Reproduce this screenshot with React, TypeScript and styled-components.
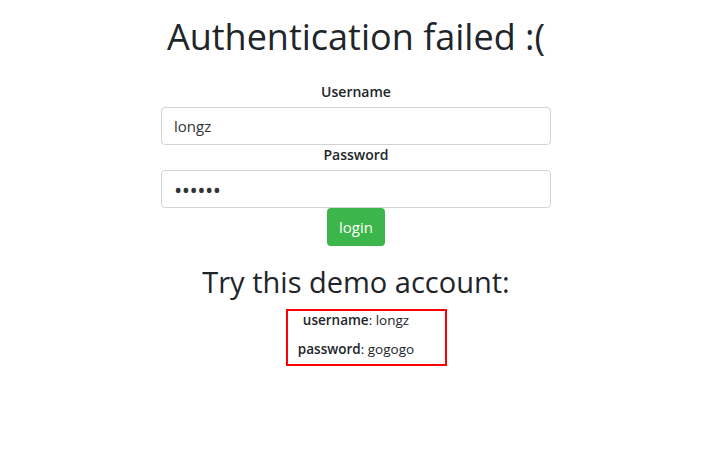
import React from "react";
import styled, { createGlobalStyle } from "styled-components";

const GlobalStyle = createGlobalStyle`
  html, body {
    margin: 0;
    padding: 0;
    background: #ffffff;
  }
  body {
    font-family: "Open Sans", "Noto Sans", sans-serif;
    color: #212529;
  }
`;

const Page = styled.div`
  display: flex;
  flex-direction: column;
  align-items: center;
  padding-right: 13px;
`;

const Title = styled.h1`
  margin: 13px 0 0;
  font-size: 36px;
  line-height: 47px;
  font-weight: 400;
  color: #212529;
`;

const LoginForm = styled.form`
  width: 390px;
  display: flex;
  flex-direction: column;
  align-items: center;
  margin-top: 22px;
`;

const Label = styled.label`
  font-size: 14px;
  font-weight: 600;
  line-height: 20px;
  margin-bottom: 5px;
`;

const TextInput = styled.input<{ $secret?: boolean }>`
  box-sizing: border-box;
  width: 100%;
  height: 38px;
  padding: 6px 12px;
  border: 1px solid #ced4da;
  border-radius: 4px;
  font-family: inherit;
  font-size: ${({ $secret }) => ($secret ? "22px" : "15px")};
  letter-spacing: ${({ $secret }) => ($secret ? "-0.5px" : "0")};
  color: #333333;
  background: #fff;
  outline: none;
`;

const LoginButton = styled.button`
  height: 38px;
  padding: 0 12px;
  border: none;
  border-radius: 4px;
  background: #3cb54a;
  color: #ffffff;
  font-family: inherit;
  font-size: 15px;
`;

const SubTitle = styled.h2`
  margin: 18px 0 0;
  font-size: 29px;
  line-height: 36px;
  font-weight: 400;
  color: #212529;
`;

const BoxRow = styled.div`
  display: flex;
  justify-content: center;
  margin-top: 9px;
`;

const CredBox = styled.div`
  box-sizing: border-box;
  width: 161px;
  height: 57px;
  margin-left: 21px;
  padding-right: 21px;
  border: 2px solid #ff0000;
  display: flex;
  flex-direction: column;
  align-items: center;
  gap: 11px;
  font-size: 13.5px;
`;

const CredLine = styled.div`
  line-height: 18px;
  b {
    font-weight: 600;
  }
`;

export default function App() {
  return (
    <Page>
      <GlobalStyle />
      <Title>Authentication failed :(</Title>
      <LoginForm onSubmit={(e) => e.preventDefault()}>
        <Label htmlFor="username">Username</Label>
        <TextInput id="username" type="text" defaultValue="longz" />
        <Label htmlFor="password">Password</Label>
        <TextInput id="password" type="password" defaultValue="gogogo" $secret />
        <LoginButton type="submit">login</LoginButton>
      </LoginForm>
      <SubTitle>Try this demo account:</SubTitle>
      <BoxRow>
        <CredBox>
          <CredLine>
            <b>username</b>: longz
          </CredLine>
          <CredLine>
            <b>password</b>: gogogo
          </CredLine>
        </CredBox>
      </BoxRow>
    </Page>
  );
}
